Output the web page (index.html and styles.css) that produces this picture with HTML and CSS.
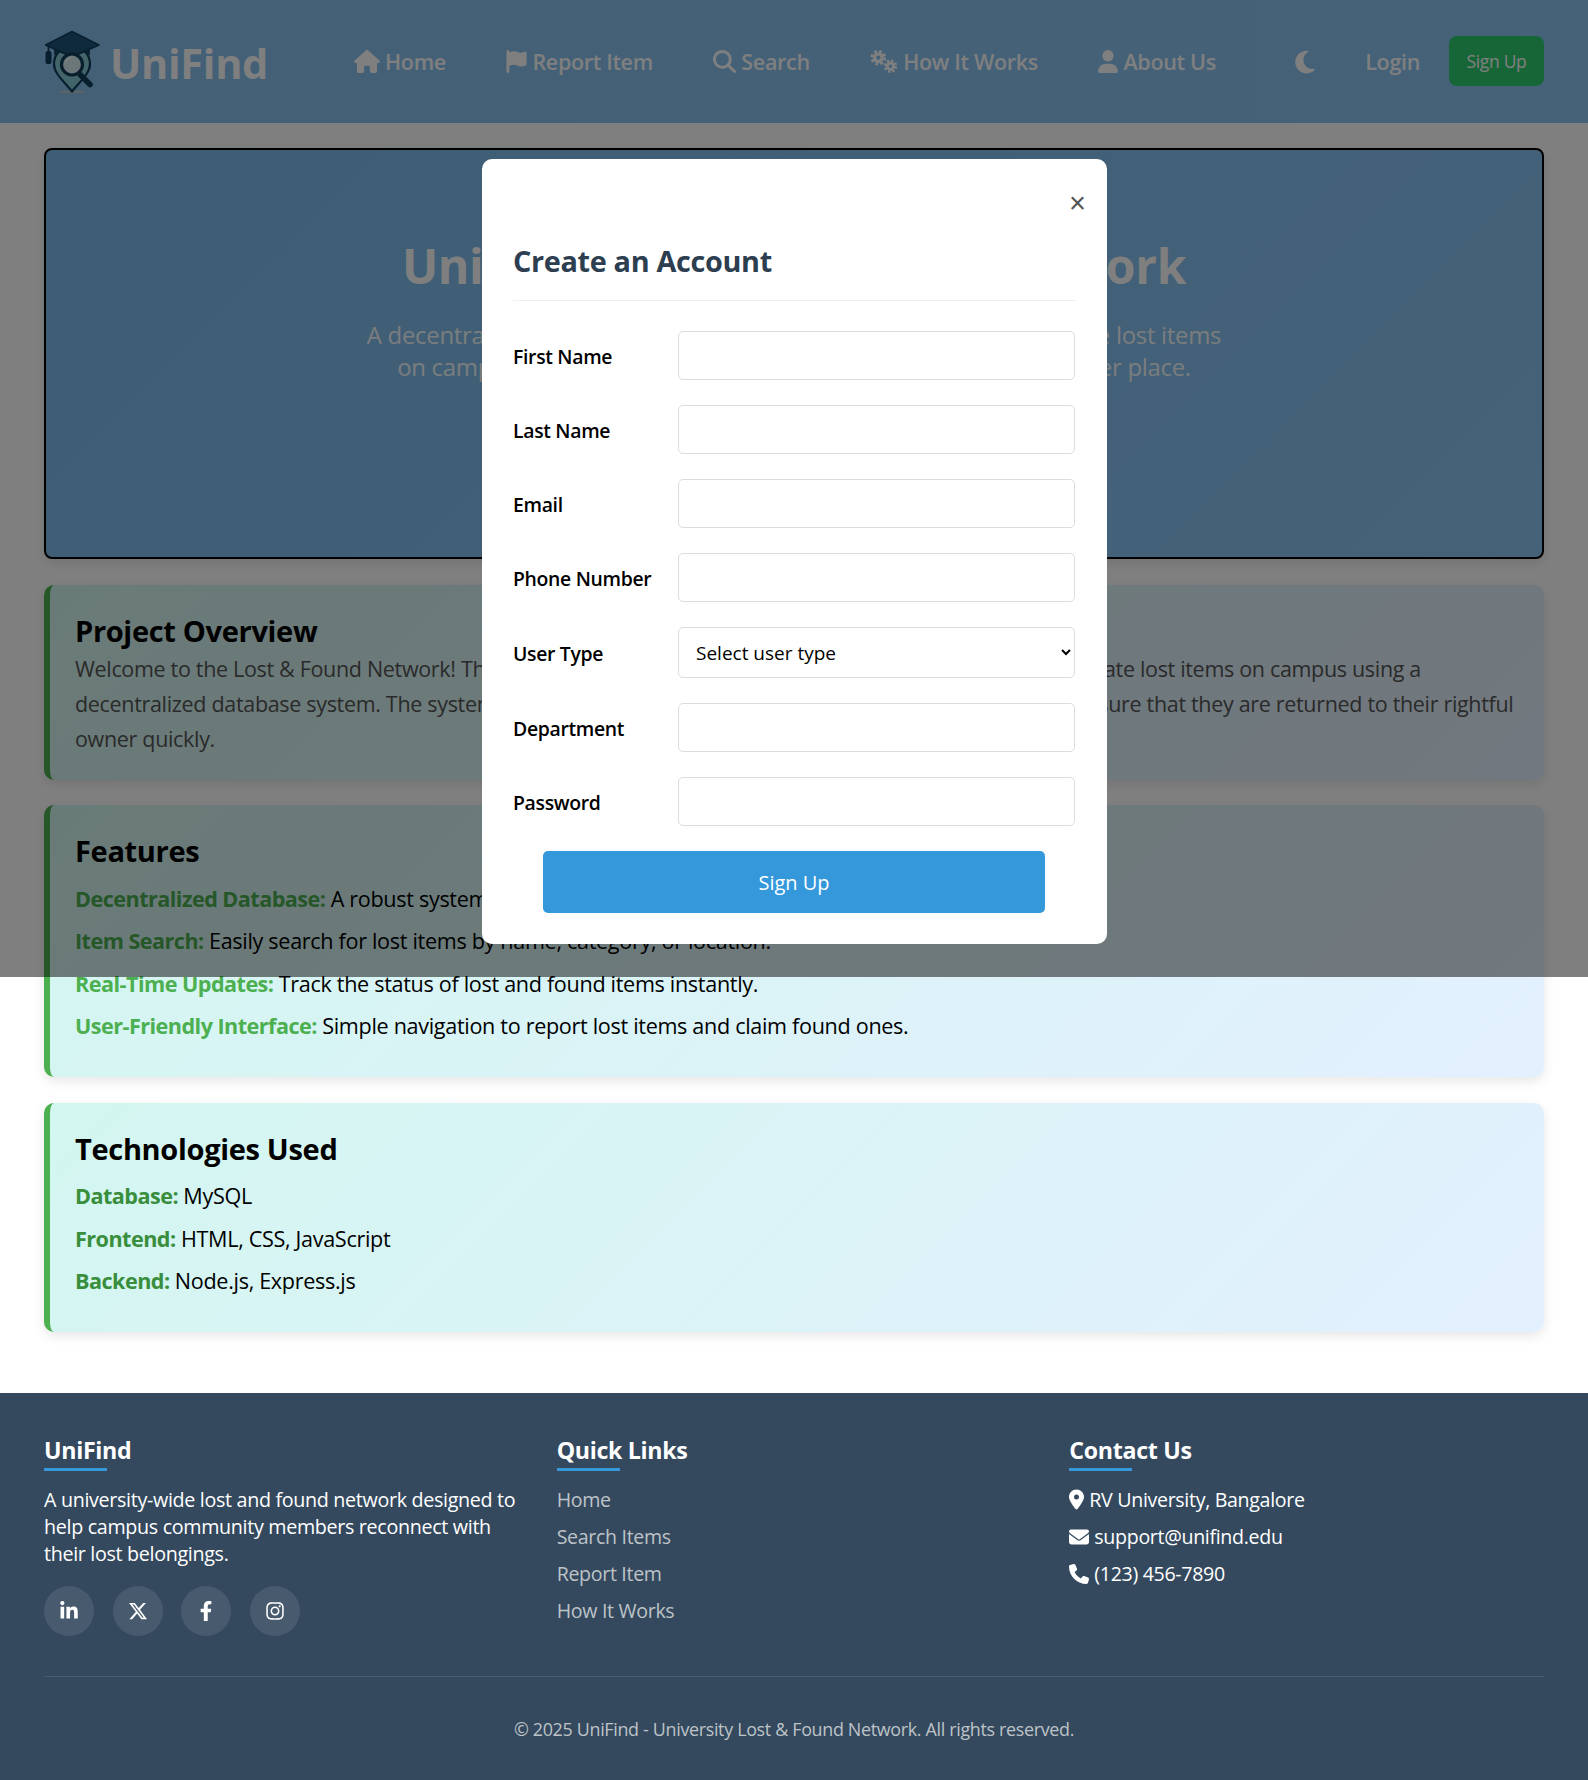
FILE: index.html
```html
<!DOCTYPE html>
<html lang="en">
<head>
  <meta charset="UTF-8" />
  <meta name="viewport" content="width=device-width, initial-scale=1.0" />
  <title>UniFind</title>
  <link rel="stylesheet" href="styles.css">
</head>
<body>
  <svg class="sprite" width="0" height="0">
    <symbol id="i-home" viewBox="0 0 576 512"><path d="M575.8 255.5c0 18-15 32.1-32 32.1h-32l.7 160.2c0 2.7-.2 5.4-.5 8.1V472c0 22.1-17.9 40-40 40H456c-1.1 0-2.2 0-3.3-.1c-1.4 .1-2.8 .1-4.2 .1H416 392c-22.1 0-40-17.9-40-40V448 384c0-17.7-14.3-32-32-32H256c-17.7 0-32 14.3-32 32v64 24c0 22.1-17.9 40-40 40H160 128.1c-1.5 0-3-.1-4.5-.2c-1.2 .1-2.4 .2-3.6 .2H104c-22.1 0-40-17.9-40-40V360c0-.9 0-1.9 .1-2.8V287.6H32c-18 0-32-14-32-32.1c0-9 3-17 10-24L266.4 8c7-7 15-8 22-8s15 2 21 7L564.8 231.5c8 7 12 15 11 24z"/></symbol>
    <symbol id="i-flag" viewBox="0 0 448 512"><path d="M64 32C64 14.3 49.7 0 32 0S0 14.3 0 32V64 368 480c0 17.7 14.3 32 32 32s32-14.3 32-32V352l64.3-16.1c41.1-10.3 84.6-5.5 122.5 13.4c44.2 22.1 95.5 24.8 141.7 7.4l34.7-13c12.5-4.7 20.8-16.6 20.8-30V66.1c0-23-24.2-38-44.8-27.7l-9.6 4.8c-46.3 23.2-100.8 23.2-147.1 0c-35.1-17.6-75.4-22-113.5-12.5L64 48V32z"/></symbol>
    <symbol id="i-search" viewBox="0 0 512 512"><path d="M416 208c0 45.9-14.9 88.3-40 122.7L502.6 457.4c12.5 12.5 12.5 32.8 0 45.3s-32.8 12.5-45.3 0L330.7 376c-34.4 25.2-76.8 40-122.7 40C93.1 416 0 322.9 0 208S93.1 0 208 0S416 93.1 416 208zM208 352a144 144 0 1 0 0-288 144 144 0 1 0 0 288z"/></symbol>
    <symbol id="i-gears" viewBox="0 0 640 512">
      <g fill="none" stroke="currentColor">
        <circle cx="205" cy="170" r="85" stroke-width="75"/>
        <circle cx="205" cy="170" r="145" stroke-width="60" stroke-dasharray="62 52"/>
        <circle cx="475" cy="360" r="72" stroke-width="66"/>
        <circle cx="475" cy="360" r="125" stroke-width="50" stroke-dasharray="54 44"/>
      </g>
    </symbol>
    <symbol id="i-user" viewBox="0 0 448 512"><path d="M224 256A128 128 0 1 0 224 0a128 128 0 1 0 0 256zm-45.7 48C79.8 304 0 383.8 0 482.3C0 498.7 13.3 512 29.7 512H418.3c16.4 0 29.7-13.3 29.7-29.7C448 383.8 368.2 304 269.7 304H178.3z"/></symbol>
    <symbol id="i-moon" viewBox="0 0 384 512"><path d="M223.5 32C100 32 0 132.3 0 256S100 480 223.5 480c60.6 0 115.5-24.2 155.8-63.4c5-4.9 6.3-12.5 3.1-18.7s-10.1-9.7-17-8.5c-9.8 1.7-19.8 2.6-30.1 2.6c-96.9 0-175.5-78.8-175.5-176c0-65.8 36-123.1 89.3-153.3c6.1-3.5 9.2-10.5 7.7-17.3s-7.3-11.9-14.3-12.5c-6.3-.5-12.6-.8-19-.8z"/></symbol>
    <symbol id="i-pin" viewBox="0 0 384 512"><path d="M215.7 499.2C267 435 384 279.4 384 192C384 86 298 0 192 0S0 86 0 192c0 87.4 117 243 168.3 307.2c12.3 15.3 35.1 15.3 47.4 0zM192 128a64 64 0 1 1 0 128 64 64 0 1 1 0-128z"/></symbol>
    <symbol id="i-mail" viewBox="0 0 512 512"><path d="M48 64C21.5 64 0 85.5 0 112c0 15.1 7.1 29.3 19.2 38.4L236.8 313.6c11.4 8.5 27 8.5 38.4 0L492.8 150.4c12.1-9.1 19.2-23.3 19.2-38.4c0-26.5-21.5-48-48-48H48zM0 176V384c0 35.3 28.7 64 64 64H448c35.3 0 64-28.7 64-64V176L294.4 339.2c-22.8 17.1-54 17.1-76.8 0L0 176z"/></symbol>
    <symbol id="i-phone" viewBox="0 0 512 512"><path d="M164.9 24.6c-7.7-18.6-28-28.5-47.4-23.2l-88 24C12.1 30.2 0 46 0 64C0 311.4 200.6 512 448 512c18 0 33.8-12.1 38.6-29.5l24-88c5.3-19.4-4.6-39.7-23.2-47.4l-96-40c-16.3-6.8-35.2-2.1-46.3 11.6L304.7 368C234.3 334.7 177.3 277.7 144 207.3L193.3 167c13.7-11.2 18.4-30 11.6-46.3l-40-96z"/></symbol>
    <symbol id="i-linkedin" viewBox="0 0 448 512"><path d="M100.28 448H7.4V148.9h92.88zM53.79 108.1C24.09 108.1 0 83.5 0 53.8a53.79 53.79 0 0 1 107.58 0c0 29.7-24.1 54.3-53.79 54.3zM447.9 448h-92.68V302.4c0-34.7-.7-79.2-48.29-79.2-48.29 0-55.69 37.7-55.69 76.7V448h-92.78V148.9h89.08v40.8h1.3c12.4-23.5 42.69-48.3 87.88-48.3 94 0 111.28 61.9 111.28 142.3V448z"/></symbol>
    <symbol id="i-x" viewBox="0 0 512 512"><path d="M389.2 48h70.6L305.6 224.2 487 464H345L233.7 318.6 106.5 464H35.8L200.7 275.5 26.8 48H172.4L272.9 180.9 389.2 48zM364.4 421.8h39.1L151.1 88h-42L364.4 421.8z"/></symbol>
    <symbol id="i-facebook" viewBox="0 0 320 512"><path d="M279.14 288l14.22-92.66h-88.91v-60.13c0-25.35 12.42-50.06 52.24-50.06h40.42V6.26S260.43 0 225.36 0c-73.22 0-121.08 44.38-121.08 124.72v70.62H22.89V288h81.39v224h100.17V288z"/></symbol>
    <symbol id="i-instagram" viewBox="0 0 448 512"><path d="M224.1 141c-63.6 0-114.9 51.3-114.9 114.9s51.3 114.9 114.9 114.9S339 319.5 339 255.9 287.7 141 224.1 141zm0 189.6c-41.1 0-74.7-33.5-74.7-74.7s33.5-74.7 74.7-74.7 74.7 33.5 74.7 74.7-33.6 74.7-74.7 74.7zm146.4-194.3c0 14.9-12 26.8-26.8 26.8-14.9 0-26.8-12-26.8-26.8s12-26.8 26.8-26.8 26.8 12 26.8 26.8zm76.1 27.2c-1.7-35.9-9.9-67.7-36.2-93.9-26.2-26.2-58-34.4-93.9-36.2-37-2.1-147.9-2.1-184.9 0-35.8 1.7-67.6 9.9-93.9 36.1s-34.4 58-36.2 93.9c-2.1 37-2.1 147.9 0 184.9 1.7 35.9 9.9 67.7 36.2 93.9s58 34.4 93.9 36.2c37 2.1 147.9 2.1 184.9 0 35.9-1.7 67.7-9.9 93.9-36.2 26.2-26.2 34.4-58 36.2-93.9 2.1-37 2.1-147.8 0-184.8zM398.8 388c-7.8 19.6-22.9 34.7-42.6 42.6-29.5 11.7-99.5 9-132.1 9s-102.7 2.6-132.1-9c-19.6-7.8-34.7-22.9-42.6-42.6-11.7-29.5-9-99.5-9-132.1s-2.6-102.7 9-132.1c7.8-19.6 22.9-34.7 42.6-42.6 29.5-11.7 99.5-9 132.1-9s102.7-2.6 132.1 9c19.6 7.8 34.7 22.9 42.6 42.6 11.7 29.5 9 99.5 9 132.1s2.7 102.7-9 132.1z"/></symbol>
  </svg>

  <header class="navbar">
    <a class="brand" href="#">
      <svg class="brand-logo" viewBox="0 0 56 64">
        <ellipse cx="28" cy="62" rx="14" ry="1.5" fill="#b9c6cc"/>
        <path d="M28 61.5 C21 52 10 44 10 34 a18 18 0 0 1 36 0 C46 44 35 52 28 61.5z" fill="#86c9d0" stroke="#123f5c" stroke-width="2.2" stroke-linejoin="round"/>
        <path d="M11 13 V24 c6 -5 28 -5 34 0 V13z" fill="#1c5478" stroke="#123f5c" stroke-width="1.6"/>
        <path d="M28 1.5 L55 15 L28 27 L1.5 15z" fill="#1c5478" stroke="#123f5c" stroke-width="1.6" stroke-linejoin="round"/>
        <path d="M4.5 16 V22" stroke="#123f5c" stroke-width="1.8"/>
        <rect x="1.5" y="21" width="6" height="13" rx="2.6" fill="#123f5c"/>
        <circle cx="28" cy="34.5" r="10.5" fill="#d6eef0" stroke="#123f5c" stroke-width="3.2"/>
        <path d="M21.5 33 a7 7 0 0 1 5 -5" fill="none" stroke="#fff" stroke-width="1.6" stroke-linecap="round"/>
        <path d="M36.5 45 L46 54.5" stroke="#123f5c" stroke-width="5.6" stroke-linecap="round"/>
      </svg>
      <span class="brand-name">UniFind</span>
    </a>
    <nav class="nav-links">
      <a href="#"><svg class="icon icon-home"><use href="#i-home"/></svg>Home</a>
      <a href="#"><svg class="icon icon-flag"><use href="#i-flag"/></svg>Report Item</a>
      <a href="#"><svg class="icon icon-search"><use href="#i-search"/></svg>Search</a>
      <a href="#"><svg class="icon icon-gears"><use href="#i-gears"/></svg>How It Works</a>
      <a href="#"><svg class="icon icon-user"><use href="#i-user"/></svg>About Us</a>
    </nav>
    <div class="nav-actions">
      <svg class="icon icon-moon"><use href="#i-moon"/></svg>
      <a class="login" href="#">Login</a>
      <a class="signup-btn" href="#">Sign Up</a>
    </div>
  </header>

  <main class="content">
    <section class="hero">
      <h1>University Lost &amp; Found Network</h1>
      <p>A decentralized platform that helps students and staff to recover the lost items<br>on campus and report found items, all in one convenient and safer place.</p>
    </section>

    <section class="card">
      <h2>Project Overview</h2>
      <p class="muted">Welcome to the Lost &amp; Found Network! This platform helps students, faculty and other staff report and locate lost items on campus using a<br>decentralized database system. The system connects every department's records and all reports to make sure that they are returned to their rightful<br>owner quickly.</p>
    </section>

    <section class="card features">
      <h2>Features</h2>
      <ul class="facts">
        <li><strong>Decentralized Database:</strong> A robust system that keeps records safe across campus.</li>
        <li><strong>Item Search:</strong> Easily search for lost items by name, category, or location.</li>
        <li><strong>Real-Time Updates:</strong> Track the status of lost and found items instantly.</li>
        <li><strong>User-Friendly Interface:</strong> Simple navigation to report lost items and claim found ones.</li>
      </ul>
    </section>

    <section class="card tech">
      <h2>Technologies Used</h2>
      <ul class="facts">
        <li><strong>Database:</strong> MySQL</li>
        <li><strong>Frontend:</strong> HTML, CSS, JavaScript</li>
        <li><strong>Backend:</strong> Node.js, Express.js</li>
      </ul>
    </section>
  </main>

  <footer class="footer">
    <div class="footer-cols">
      <div>
        <h3>UniFind</h3>
        <p class="about">A university-wide lost and found network designed to help campus community members reconnect with their lost belongings.</p>
        <div class="socials">
          <a href="#"><svg class="icon"><use href="#i-linkedin"/></svg></a>
          <a href="#"><svg class="icon"><use href="#i-x"/></svg></a>
          <a href="#"><svg class="icon"><use href="#i-facebook"/></svg></a>
          <a href="#"><svg class="icon"><use href="#i-instagram"/></svg></a>
        </div>
      </div>
      <div>
        <h3>Quick Links</h3>
        <ul class="footer-links">
          <li><a href="#">Home</a></li>
          <li><a href="#">Search Items</a></li>
          <li><a href="#">Report Item</a></li>
          <li><a href="#">How It Works</a></li>
        </ul>
      </div>
      <div>
        <h3>Contact Us</h3>
        <ul class="contact">
          <li><svg class="icon icon-pin"><use href="#i-pin"/></svg>RV University, Bangalore</li>
          <li><svg class="icon icon-contact"><use href="#i-mail"/></svg>support@unifind.edu</li>
          <li><svg class="icon icon-contact"><use href="#i-phone"/></svg>(123) 456-7890</li>
        </ul>
      </div>
    </div>
    <div class="copyright">© 2025 UniFind - University Lost &amp; Found Network. All rights reserved.</div>
  </footer>

  <div class="overlay">
    <div class="modal">
      <button class="close" type="button">×</button>
      <h2>Create an Account</h2>
      <form class="signup-form">
        <div class="form-row"><label for="first">First Name</label><input id="first" type="text"></div>
        <div class="form-row"><label for="last">Last Name</label><input id="last" type="text"></div>
        <div class="form-row"><label for="email">Email</label><input id="email" type="email"></div>
        <div class="form-row"><label for="phone">Phone Number</label><input id="phone" type="tel"></div>
        <div class="form-row"><label for="type">User Type</label>
          <select id="type"><option>Select user type</option></select>
        </div>
        <div class="form-row"><label for="dept">Department</label><input id="dept" type="text"></div>
        <div class="form-row"><label for="pass">Password</label><input id="pass" type="password"></div>
        <button class="submit" type="button">Sign Up</button>
      </form>
    </div>
  </div>
</body>
</html>
```

FILE: styles.css
```css
* {
  box-sizing: border-box;
}
body {
  margin: 0;
  position: relative;
  background: #fff;
  color: #000;
  font-family: "Open Sans", "Noto Sans", sans-serif;
  letter-spacing: -0.32px;
}
a {
  color: inherit;
  text-decoration: none;
}
ul {
  list-style: none;
  margin: 0;
  padding: 0;
}
.sprite {
  position: absolute;
}
.icon {
  display: inline-block;
  width: 1em;
  height: 1em;
  fill: currentColor;
  flex: none;
}

/* navbar */
.navbar {
  height: 123px;
  padding: 0 44px;
  display: flex;
  align-items: center;
  background: linear-gradient(90deg, #86c0ee, #8ac4f2);
  color: #fff;
}
.brand {
  display: flex;
  align-items: center;
  gap: 10px;
  width: 310px;
}
.brand-logo {
  width: 56px;
  height: 64px;
}
.brand-name {
  margin-top: 2px;
  font-size: 41.5px;
  font-weight: 700;
}
.nav-links {
  display: flex;
  align-items: center;
  gap: 60.5px;
  font-size: 21.5px;
  font-weight: 600;
}
.nav-links a {
  display: flex;
  align-items: center;
  gap: 5px;
}
.icon-home { width: 26px; height: 23px; }
.icon-flag { width: 21px; height: 23px; }
.icon-search { width: 23px; height: 23px; }
.icon-gears { width: 29px; height: 23px; margin-left: -1px; }
.icon-user { width: 20px; height: 23px; }
.nav-actions {
  margin-left: auto;
  display: flex;
  align-items: center;
  font-size: 21.5px;
}
.icon-moon {
  width: 20px;
  height: 26px;
  margin-right: 50px;
}
.login {
  font-weight: 600;
  margin-right: 29px;
}
.signup-btn {
  width: 95px;
  height: 50px;
  margin-bottom: 1px;
  display: flex;
  align-items: center;
  justify-content: center;
  background: #2ecc71;
  border-radius: 8px;
  font-size: 17.5px;
}

/* main content */
.content {
  padding: 25px 44px 61px;
}
.hero {
  height: 411px;
  padding-top: 84px;
  border: 2px solid #000;
  border-radius: 8px;
  background: linear-gradient(135deg, #7cbcec, #8ac4f2);
  box-shadow: 0 4px 12px rgba(0, 0, 0, 0.1);
  color: #fff;
  text-align: center;
}
.hero h1 {
  margin: 0 0 21px;
  font-size: 48px;
  line-height: 64px;
  font-weight: 700;
}
.hero p {
  margin: 0;
  font-size: 24px;
  line-height: 32px;
  opacity: 0.92;
}
.card {
  margin-top: 25.5px;
  padding: 26px 25px 24px;
  border-left: 6px solid #4caf50;
  border-radius: 10px;
  background: linear-gradient(135deg, #d3f6f0, #e3f0fe);
  box-shadow: 0 4px 12px rgba(0, 0, 0, 0.1);
}
.card h2 {
  margin: 0;
  font-size: 29px;
  line-height: 40px;
  font-weight: 700;
}
.muted {
  margin: 0;
  color: #555;
  font-size: 21.5px;
  line-height: 35px;
}
.facts {
  margin-top: 6.5px;
  padding-bottom: 5.5px;
  font-size: 21.6px;
}
.facts li {
  line-height: 42.5px;
}
.facts strong {
  color: #4caf50;
  font-weight: 700;
  letter-spacing: -0.53px;
}
.tech .facts strong {
  color: #388e3c;
}

/* footer */
.footer {
  height: 387px;
  padding: 39px 44px 0;
  background: #34495e;
  color: #fff;
}
.footer-cols {
  display: grid;
  grid-template-columns: repeat(3, 1fr);
  gap: 38px;
  height: 245px;
  border-bottom: 1px solid rgba(255, 255, 255, 0.1);
}
.footer h3 {
  position: relative;
  margin: 0 0 13px;
  font-size: 23.2px;
  line-height: 36px;
  font-weight: 700;
}
.footer h3::after {
  content: "";
  position: absolute;
  left: 0;
  bottom: -3px;
  width: 63px;
  height: 3px;
  background: #3498db;
}
.about {
  margin: 18px 0 19px;
  font-size: 19.7px;
  line-height: 27px;
}
.socials {
  display: flex;
  gap: 18.7px;
}
.socials a {
  width: 50px;
  height: 50px;
  border-radius: 50%;
  display: flex;
  align-items: center;
  justify-content: center;
  background: rgba(255, 255, 255, 0.1);
  font-size: 20px;
}
.footer-links li,
.contact li {
  font-size: 19.6px;
  line-height: 37px;
}
.footer-links {
  color: #bdc3c7;
}
.contact li {
  display: flex;
  align-items: center;
  gap: 5px;
}
.icon-pin { width: 15px; height: 21px; }
.icon-contact { width: 20px; height: 20px; }
.copyright {
  padding-top: 40px;
  text-align: center;
  color: #bdc3c7;
  font-size: 17.9px;
}

/* signup modal */
.overlay {
  position: absolute;
  top: 0;
  left: 0;
  width: 100%;
  height: 977px;
  background: rgba(0, 0, 0, 0.5);
  padding-top: 159px;
}
.modal {
  position: relative;
  width: 625px;
  height: 785px;
  margin: 0 auto 0 482px;
  padding: 0 32px 0 31px;
  background: #fff;
  border-radius: 10px;
}
.close {
  position: absolute;
  top: 25px;
  right: 21px;
  padding: 0;
  border: 0;
  background: none;
  color: #555;
  font-size: 29px;
  line-height: 38px;
}
.modal h2 {
  margin: 0 0 30px;
  padding: 81px 0 18px;
  height: 142px;
  border-bottom: 1px solid #eee;
  color: #2c3e50;
  font-size: 28.8px;
  line-height: 42px;
  font-weight: 700;
}
.form-row {
  display: flex;
  align-items: center;
  margin-bottom: 25px;
}
.form-row label {
  width: 165px;
  flex: none;
  padding-top: 2px;
  font-size: 19.4px;
  font-weight: 600;
}
.form-row input,
.form-row select {
  flex: 1;
  height: 49px;
  padding: 0 17px;
  border: 1px solid #ddd;
  border-radius: 5px;
  background: #fff;
  color: #000;
  font-family: inherit;
  font-size: 19px;
}
.form-row select {
  height: 51px;
  padding: 0 13px;
}
.submit {
  display: block;
  width: 502px;
  height: 62px;
  margin: 0 auto;
  border: 0;
  border-radius: 5px;
  background: #3498db;
  color: #fff;
  font-family: inherit;
  font-size: 20px;
}
```
